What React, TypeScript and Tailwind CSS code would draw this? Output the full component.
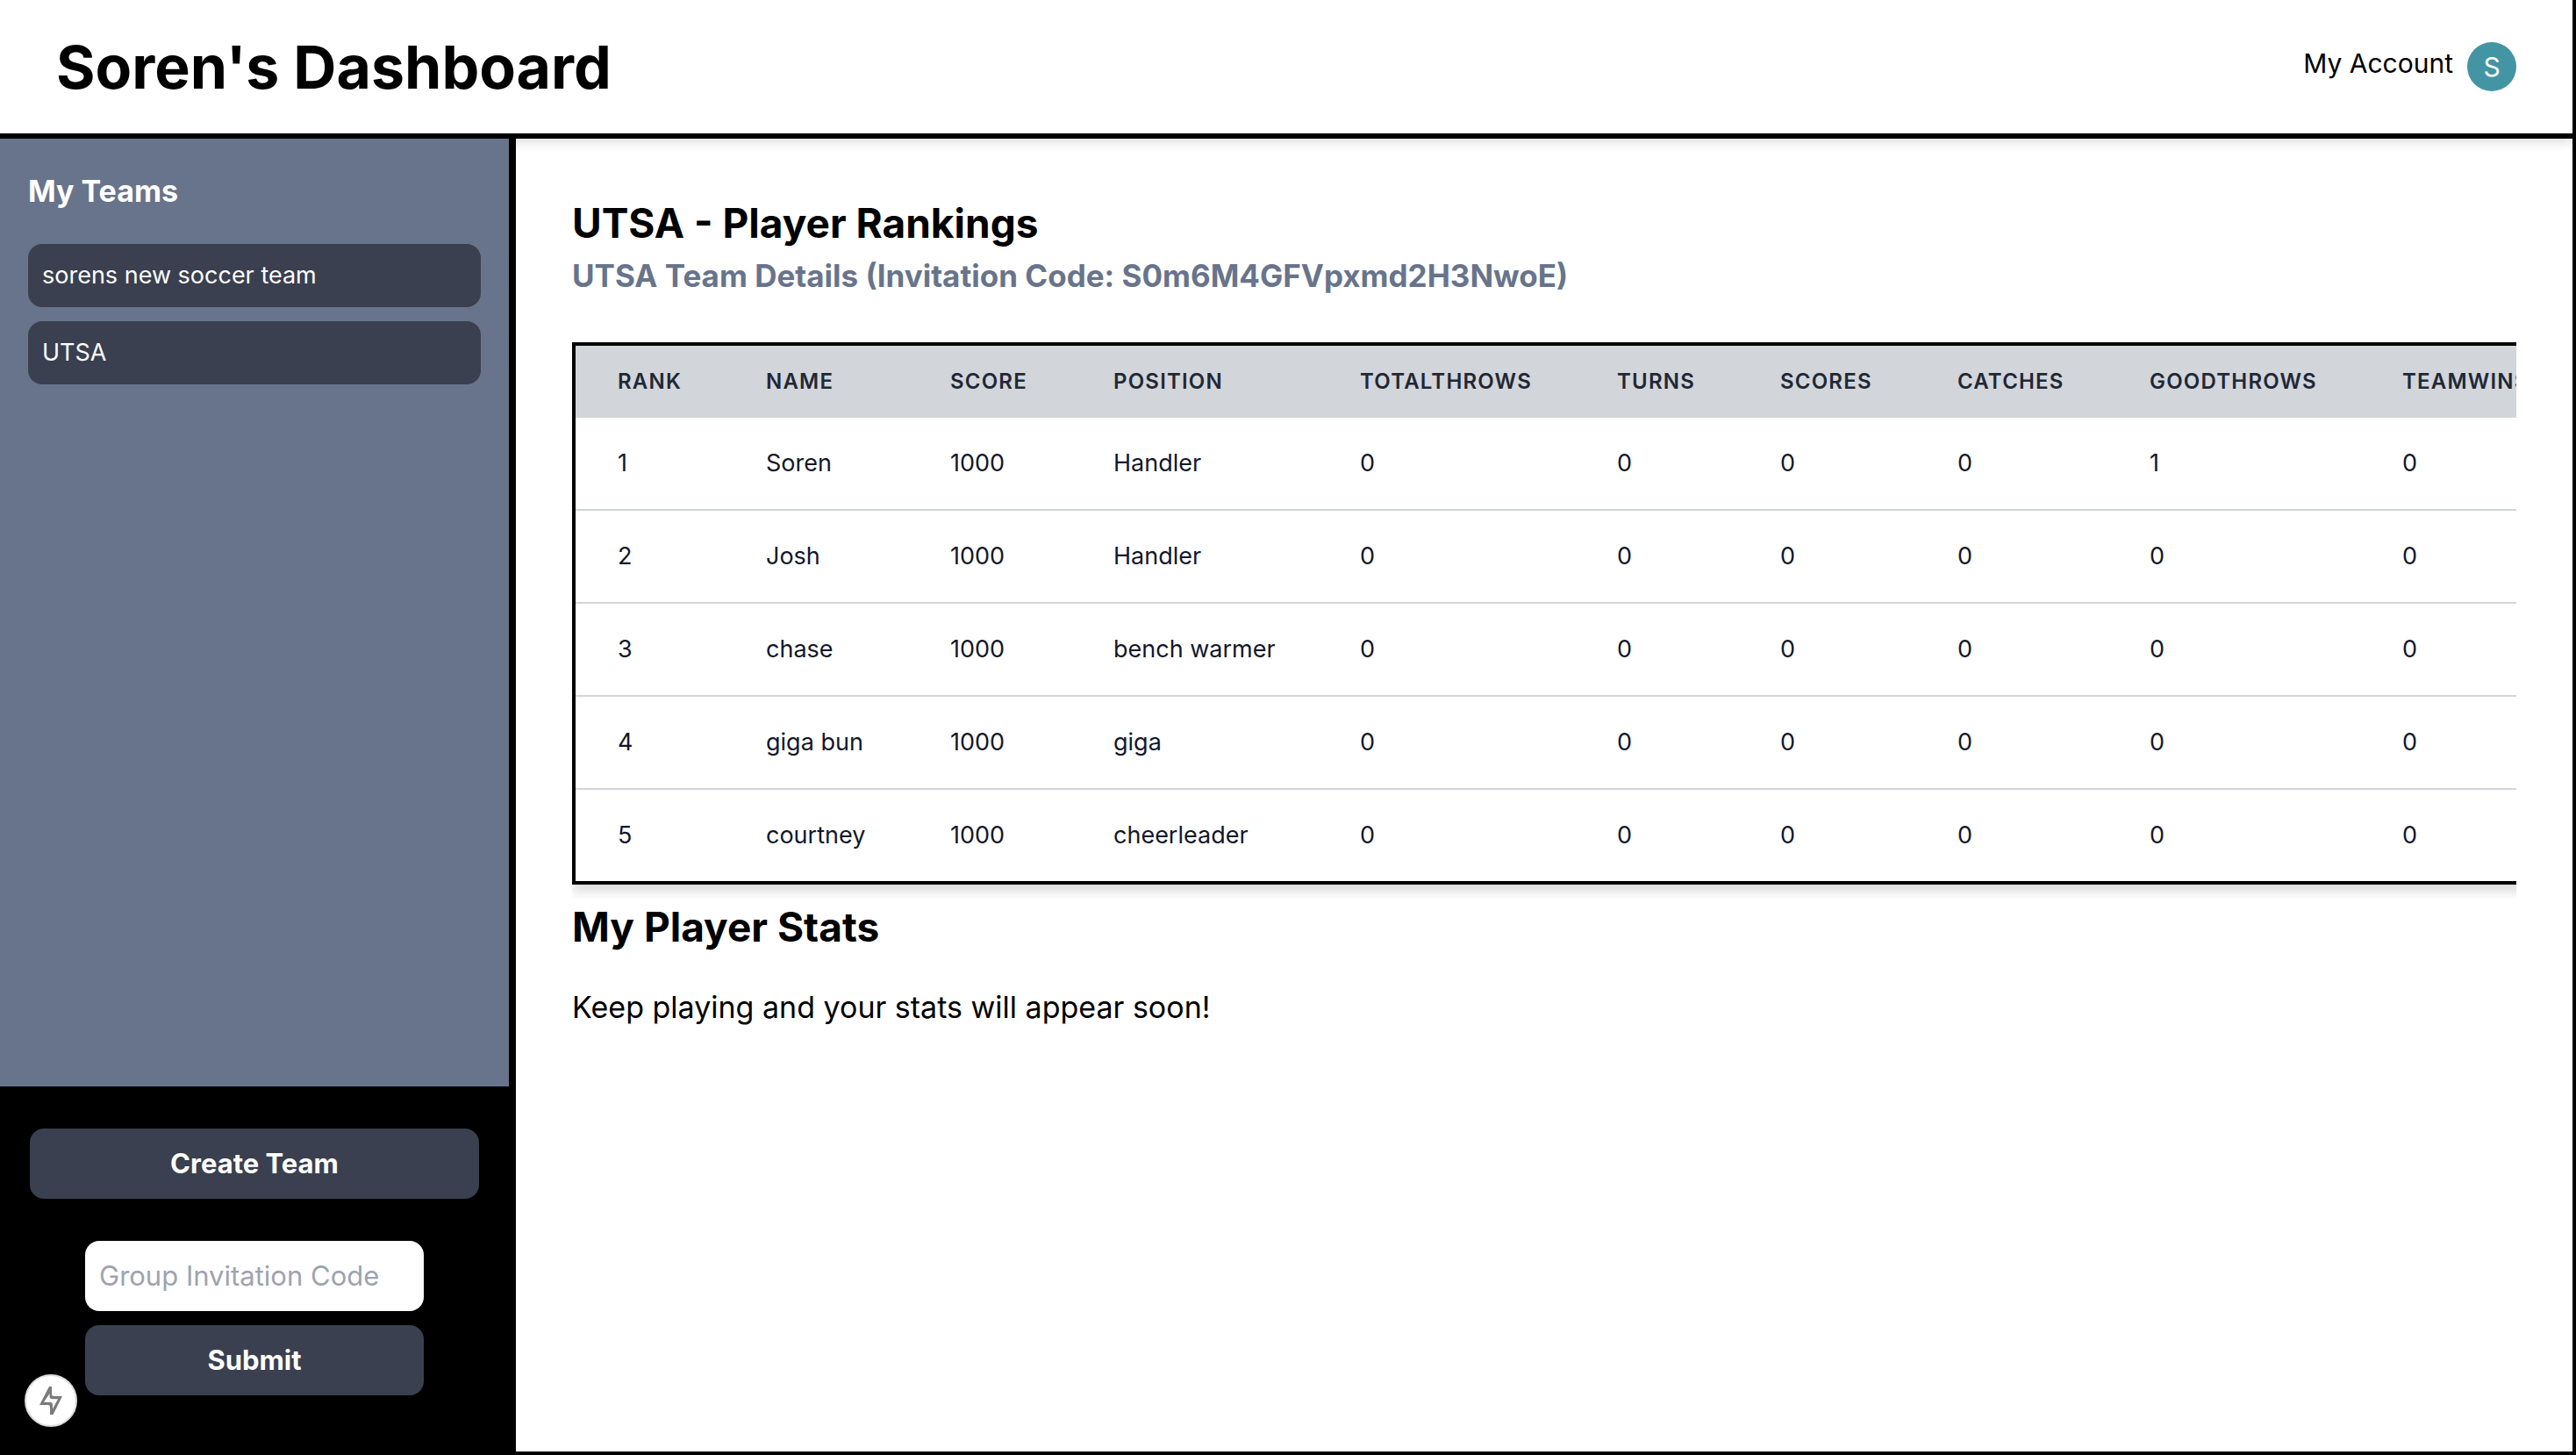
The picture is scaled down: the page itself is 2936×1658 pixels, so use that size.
const teams = ["sorens new soccer team", "UTSA"];

const columns = [
  { label: "Rank", width: "w-[169px]" },
  { label: "Name", width: "w-[210px]" },
  { label: "Score", width: "w-[186px]" },
  { label: "Position", width: "w-[281px]" },
  { label: "TotalThrows", width: "w-[293px]" },
  { label: "Turns", width: "w-[186px]" },
  { label: "Scores", width: "w-[202px]" },
  { label: "Catches", width: "w-[219px]" },
  { label: "GoodThrows", width: "w-[288px]" },
  { label: "TeamWins", width: "w-[258px]" },
];

const players = [
  ["1", "Soren", "1000", "Handler", "0", "0", "0", "0", "1", "0"],
  ["2", "Josh", "1000", "Handler", "0", "0", "0", "0", "0", "0"],
  ["3", "chase", "1000", "bench warmer", "0", "0", "0", "0", "0", "0"],
  ["4", "giga bun", "1000", "giga", "0", "0", "0", "0", "0", "0"],
  ["5", "courtney", "1000", "cheerleader", "0", "0", "0", "0", "0", "0"],
];

function Header() {
  return (
    <header className="flex items-center justify-between border-b-6 border-black bg-white px-16 py-8 shadow-[0_4px_12px_rgba(0,0,0,0.14)]">
      <h1 className="text-[68px] leading-[88px] font-bold">Soren's Dashboard</h1>
      <button type="button" className="flex items-start gap-4 text-[30px] leading-12">
        My Account
        <span className="flex size-14 items-center justify-center rounded-full bg-[#4495a3] text-[30px] text-white">
          S
        </span>
      </button>
    </header>
  );
}

function Sidebar() {
  return (
    <aside className="flex w-[588px] shrink-0 flex-col border-r-8 border-black bg-[#68748b] text-white">
      <nav className="flex-1 p-8" aria-labelledby="teams">
        <h2 id="teams" className="mb-8 text-[34px] leading-14 font-bold">My Teams</h2>
        <ul className="flex flex-col gap-4">
          {teams.map((team) => (
            <li key={team}>
              <button
                type="button"
                className="w-full rounded-2xl bg-[#3a404f] p-4 text-left text-[27px] leading-10"
              >
                {team}
              </button>
            </li>
          ))}
        </ul>
      </nav>
      <div className="flex flex-col items-center gap-12 bg-black pt-12 pb-16 text-[31px] leading-12">
        <button type="button" className="w-[512px] rounded-2xl bg-[#3a404f] p-4 font-bold">
          Create Team
        </button>
        <form className="flex w-[386px] flex-col gap-4" onSubmit={(e) => e.preventDefault()}>
          <input
            type="text"
            aria-label="Group Invitation Code"
            placeholder="Group Invitation Code"
            className="w-full rounded-2xl bg-white p-4 text-black placeholder:text-[#9ea3af]"
          />
          <button type="submit" className="rounded-2xl bg-[#3a404f] p-4 font-bold">
            Submit
          </button>
        </form>
      </div>
    </aside>
  );
}

function Rankings() {
  return (
    <div className="mt-12 overflow-x-auto pb-4 [scrollbar-width:none]">
      <table className="w-[2300px] table-fixed border-separate border-spacing-0 border-4 border-black text-left shadow-[0_8px_12px_rgba(0,0,0,0.14)]">
        <thead className="bg-[#d2d5da] text-[#1f2836]">
          <tr>
            {columns.map((c) => (
              <th
                key={c.label}
                scope="col"
                className={`${c.width} h-[82px] pl-12 text-[24px] leading-8 font-semibold tracking-wider uppercase`}
              >
                {c.label}
              </th>
            ))}
          </tr>
        </thead>
        <tbody className="bg-white text-[#12182a]">
          {players.map((row) => (
            <tr key={row[0]} className="group">
              {row.map((value, i) => (
                <td
                  key={columns[i].label}
                  className="border-b-2 border-[#d2d5da] py-8 pl-12 text-[27px] leading-10 whitespace-nowrap group-last:border-b-0"
                >
                  {value}
                </td>
              ))}
            </tr>
          ))}
        </tbody>
      </table>
    </div>
  );
}

function DevIndicator() {
  return (
    <button
      type="button"
      aria-label="Build status"
      className="fixed bottom-8 left-7 flex size-15 items-center justify-center rounded-full border-2 border-[#dcdcdc] bg-white"
    >
      <svg viewBox="0 0 26 32" className="h-8 w-[26px]" fill="#7b7b7b" fillRule="evenodd" aria-hidden="true">
        <path d="M11 0H14V8.5Q14 11 16.5 11H26L15.5 32H12V23Q12 21 10 21H0ZM11.5 8L5 17.7H12Q15 17.7 15 21V25.5L21 14.2H15Q11.5 14.2 11.5 11Z" />
      </svg>
    </button>
  );
}

export default function App() {
  return (
    <div className="flex min-h-screen flex-col border-r-4 border-b-4 border-black bg-white font-['Inter',sans-serif] text-black">
      <Header />
      <div className="flex flex-1">
        <Sidebar />
        <main className="min-w-0 flex-1 p-16">
          <h2 className="text-[46px] leading-16 font-bold">UTSA - Player Rankings</h2>
          <h3 className="text-[35px] leading-14 font-bold text-[#68748b]">
            UTSA Team Details (Invitation Code: S0m6M4GFVpxmd2H3NwoE)
          </h3>
          <Rankings />
          <h2 className="text-[46px] leading-16 font-bold">My Player Stats</h2>
          <p className="mt-8 text-[34px] leading-14">Keep playing and your stats will appear soon!</p>
        </main>
      </div>
      <DevIndicator />
    </div>
  );
}
